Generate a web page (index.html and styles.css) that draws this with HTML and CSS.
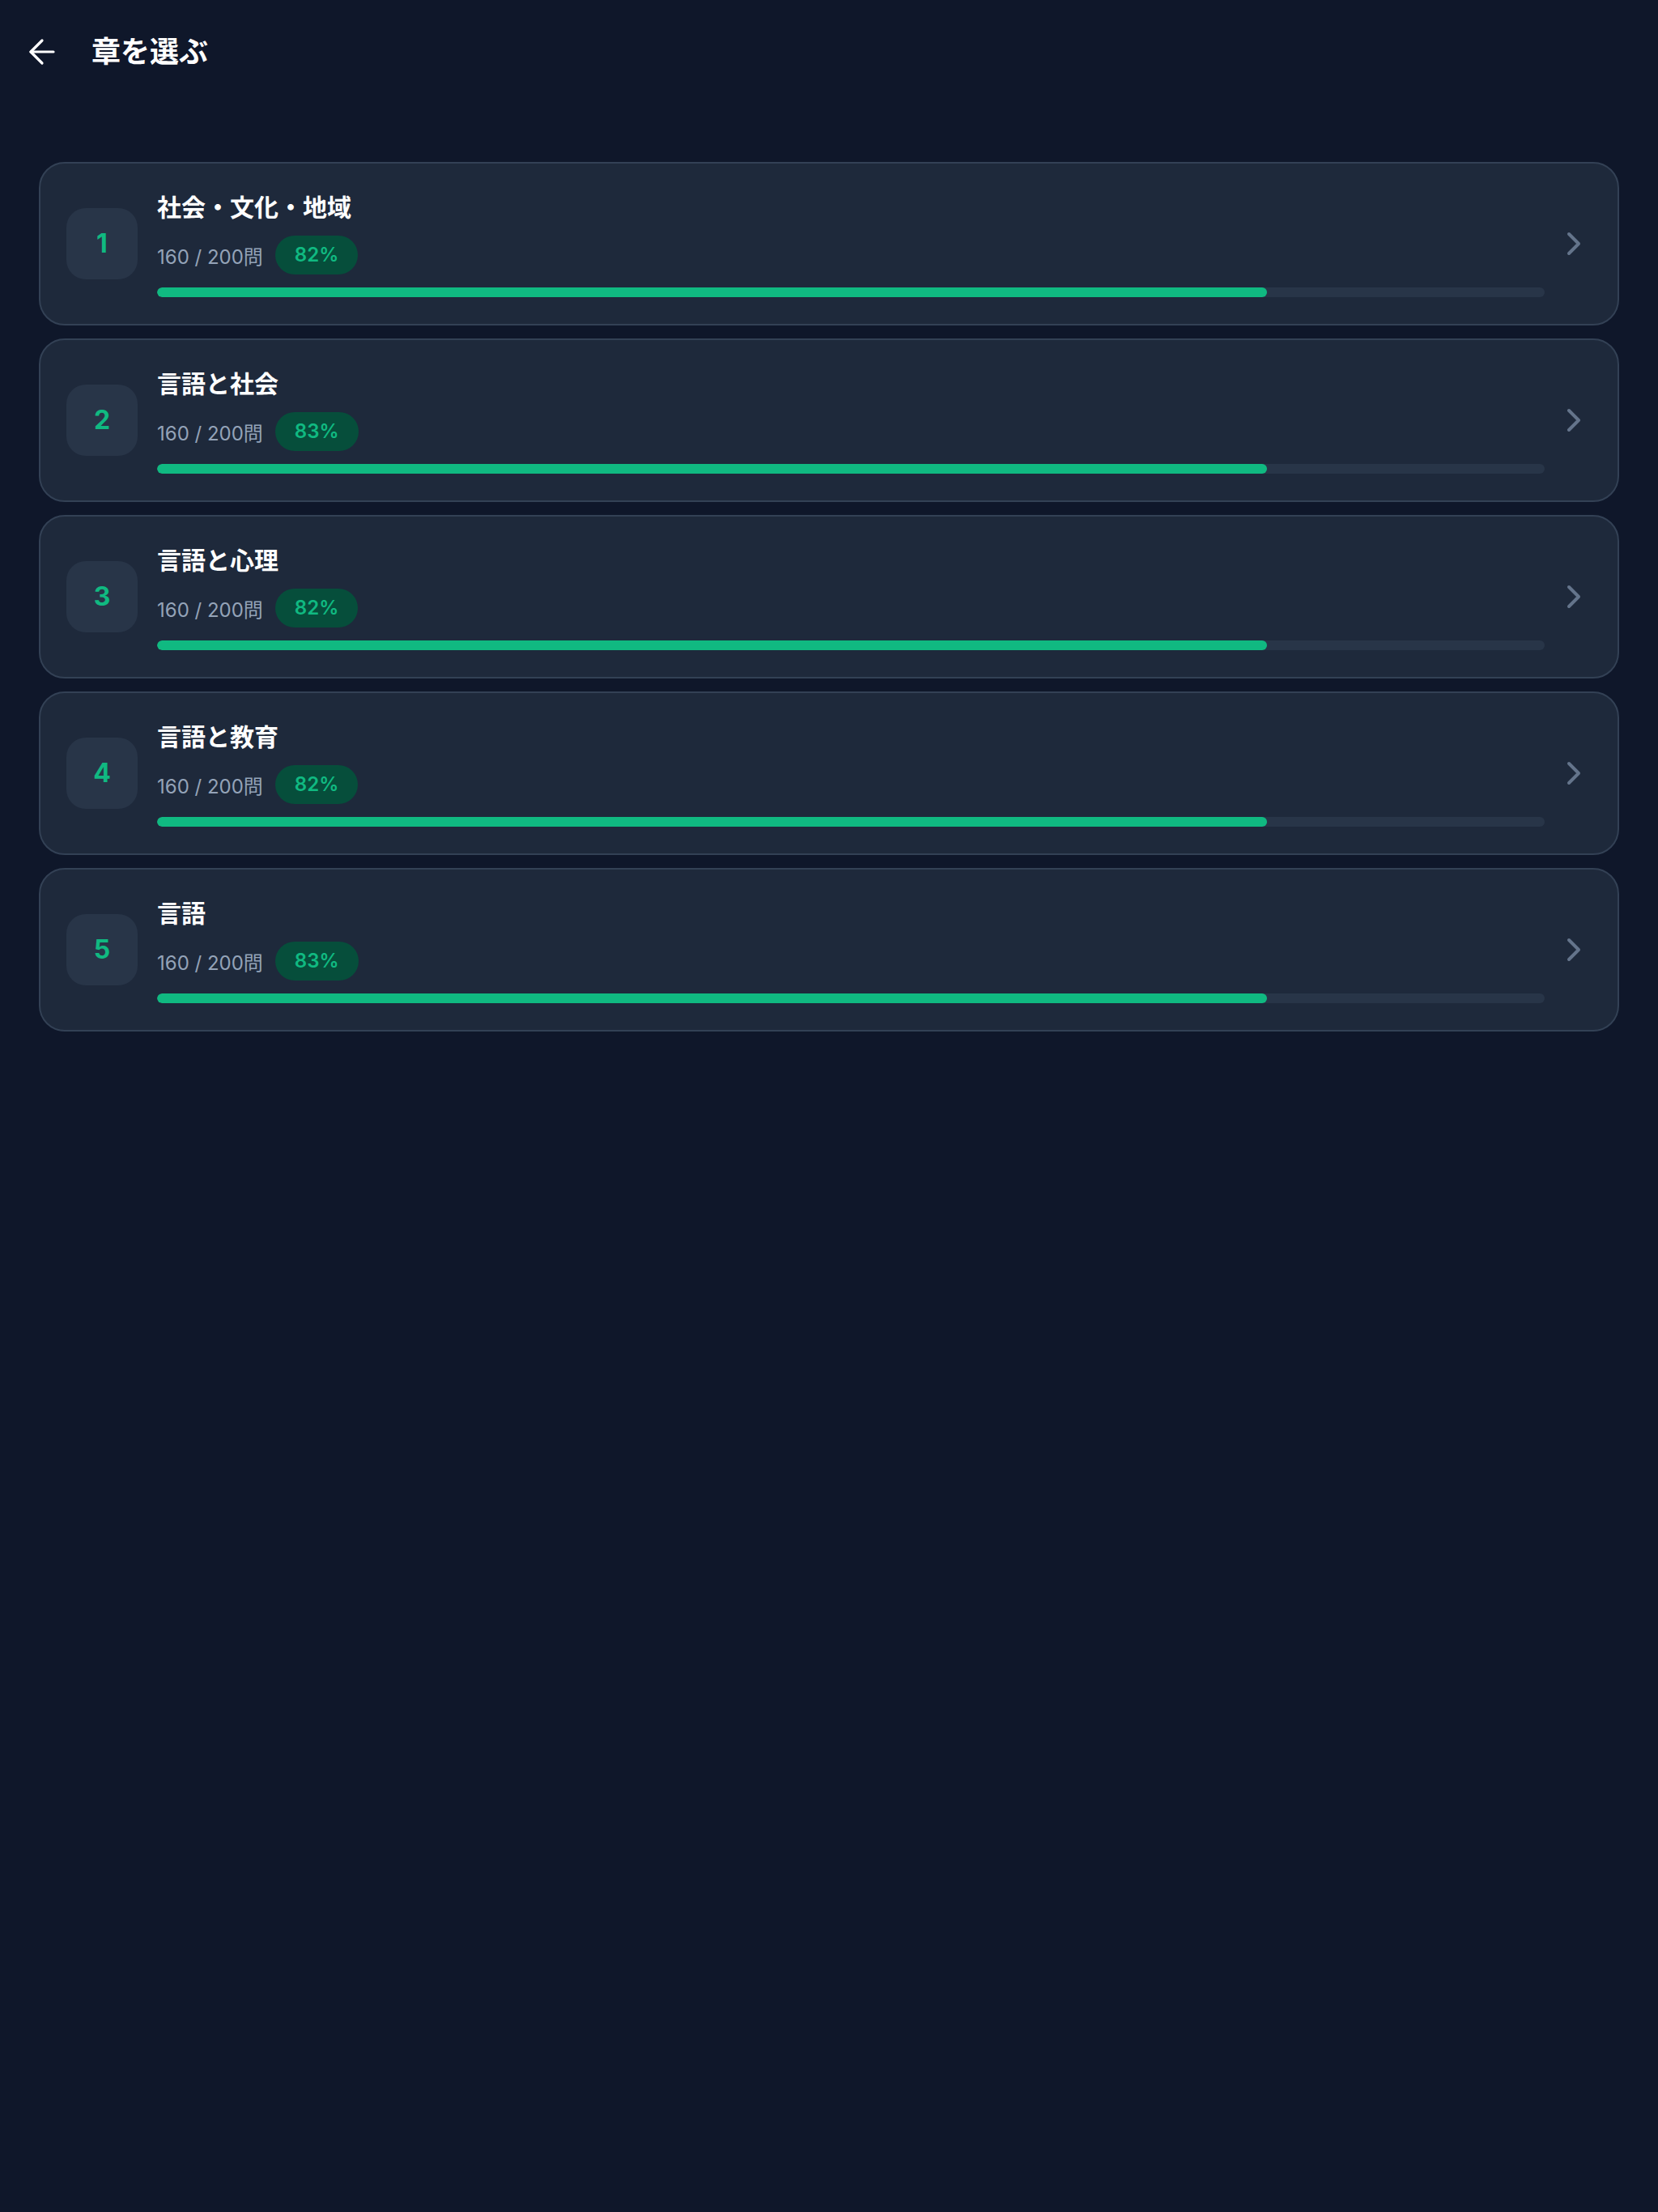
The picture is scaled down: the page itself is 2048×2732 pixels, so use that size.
FILE: index.html
```html
<!DOCTYPE html>
<html lang="ja">
<head>
<meta charset="utf-8">
<title>章を選ぶ</title>
<link rel="stylesheet" href="styles.css">
</head>
<body>
<header class="topbar">
  <button class="back-btn" aria-label="戻る">
    <svg class="back-icon" viewBox="0 0 24 24" fill="none" stroke="currentColor" stroke-width="1.6" stroke-linecap="round" stroke-linejoin="round"><path d="m12 19-7-7 7-7"/><path d="M19 12H5"/></svg>
  </button>
  <h1 class="page-title">章を選ぶ</h1>
</header>

<main class="chapter-list">
  <a class="chapter-card" href="#">
    <div class="chapter-num">1</div>
    <div class="chapter-body">
      <div class="chapter-title">社会・文化・地域</div>
      <div class="chapter-stats">
        <span class="chapter-count">160 / 200問</span>
        <span class="chapter-badge">82%</span>
      </div>
      <div class="progress-track"><div class="progress-fill" style="width: 80%"></div></div>
    </div>
    <svg class="chevron" viewBox="0 0 24 24" fill="none" stroke="currentColor" stroke-width="2" stroke-linecap="round" stroke-linejoin="round"><path d="m9 18 6-6-6-6"/></svg>
  </a>

  <a class="chapter-card" href="#">
    <div class="chapter-num">2</div>
    <div class="chapter-body">
      <div class="chapter-title">言語と社会</div>
      <div class="chapter-stats">
        <span class="chapter-count">160 / 200問</span>
        <span class="chapter-badge">83%</span>
      </div>
      <div class="progress-track"><div class="progress-fill" style="width: 80%"></div></div>
    </div>
    <svg class="chevron" viewBox="0 0 24 24" fill="none" stroke="currentColor" stroke-width="2" stroke-linecap="round" stroke-linejoin="round"><path d="m9 18 6-6-6-6"/></svg>
  </a>

  <a class="chapter-card" href="#">
    <div class="chapter-num">3</div>
    <div class="chapter-body">
      <div class="chapter-title">言語と心理</div>
      <div class="chapter-stats">
        <span class="chapter-count">160 / 200問</span>
        <span class="chapter-badge">82%</span>
      </div>
      <div class="progress-track"><div class="progress-fill" style="width: 80%"></div></div>
    </div>
    <svg class="chevron" viewBox="0 0 24 24" fill="none" stroke="currentColor" stroke-width="2" stroke-linecap="round" stroke-linejoin="round"><path d="m9 18 6-6-6-6"/></svg>
  </a>

  <a class="chapter-card" href="#">
    <div class="chapter-num">4</div>
    <div class="chapter-body">
      <div class="chapter-title">言語と教育</div>
      <div class="chapter-stats">
        <span class="chapter-count">160 / 200問</span>
        <span class="chapter-badge">82%</span>
      </div>
      <div class="progress-track"><div class="progress-fill" style="width: 80%"></div></div>
    </div>
    <svg class="chevron" viewBox="0 0 24 24" fill="none" stroke="currentColor" stroke-width="2" stroke-linecap="round" stroke-linejoin="round"><path d="m9 18 6-6-6-6"/></svg>
  </a>

  <a class="chapter-card" href="#">
    <div class="chapter-num">5</div>
    <div class="chapter-body">
      <div class="chapter-title">言語</div>
      <div class="chapter-stats">
        <span class="chapter-count">160 / 200問</span>
        <span class="chapter-badge">83%</span>
      </div>
      <div class="progress-track"><div class="progress-fill" style="width: 80%"></div></div>
    </div>
    <svg class="chevron" viewBox="0 0 24 24" fill="none" stroke="currentColor" stroke-width="2" stroke-linecap="round" stroke-linejoin="round"><path d="m9 18 6-6-6-6"/></svg>
  </a>
</main>
</body>
</html>
```

FILE: styles.css
```css
* {
  box-sizing: border-box;
}

html, body {
  margin: 0;
  padding: 0;
  background: #0f172a;
}

body {
  min-height: 2732px;
  font-family: "Inter", "Noto Sans CJK JP", sans-serif;
  color: #f8fafc;
}

.topbar {
  height: 128px;
  display: flex;
  align-items: center;
  padding: 0 0 0 28px;
  gap: 37px;
}

.back-btn {
  width: 48px;
  height: 48px;
  padding: 0;
  border: 0;
  background: transparent;
  color: #ffffff;
  display: flex;
  align-items: center;
  justify-content: center;
}

.back-icon {
  width: 48px;
  height: 48px;
  display: block;
}

.page-title {
  margin: 0;
  font-size: 36px;
  line-height: 48px;
  font-weight: 700;
  color: #ffffff;
}

.chapter-list {
  padding: 72px 48px;
  display: flex;
  flex-direction: column;
  gap: 16px;
}

.chapter-card {
  display: flex;
  align-items: center;
  gap: 24px;
  height: 202px;
  padding: 32px 30px 33px 32px;
  background: #1e293b;
  border: 2px solid #334155;
  border-radius: 32px;
  text-decoration: none;
  color: inherit;
}

.chapter-num {
  flex: 0 0 88px;
  width: 88px;
  height: 88px;
  border-radius: 24px;
  background: #283548;
  color: #10b981;
  font-size: 32px;
  font-weight: 700;
  display: flex;
  align-items: center;
  justify-content: center;
}

.chapter-body {
  flex: 1 1 auto;
  display: flex;
  flex-direction: column;
  align-self: stretch;
}

.chapter-title {
  font-size: 30px;
  line-height: 44px;
  font-weight: 700;
  color: #ffffff;
}

.chapter-stats {
  margin-top: 13px;
  display: flex;
  align-items: center;
  gap: 15px;
  height: 48px;
}

.chapter-count {
  font-size: 24px;
  color: #94a3b8;
}

.chapter-badge {
  height: 48px;
  line-height: 48px;
  padding: 0 24px;
  border-radius: 24px;
  background: #064e3b;
  color: #10b981;
  font-size: 24px;
  font-weight: 600;
}

.progress-track {
  margin-top: 16px;
  height: 12px;
  border-radius: 6px;
  background: #283548;
  overflow: hidden;
}

.progress-fill {
  height: 100%;
  border-radius: 6px;
  background: #10b981;
}

.chevron {
  flex: 0 0 48px;
  width: 48px;
  height: 48px;
  margin-left: -12px;
  color: #64748b;
}
```
